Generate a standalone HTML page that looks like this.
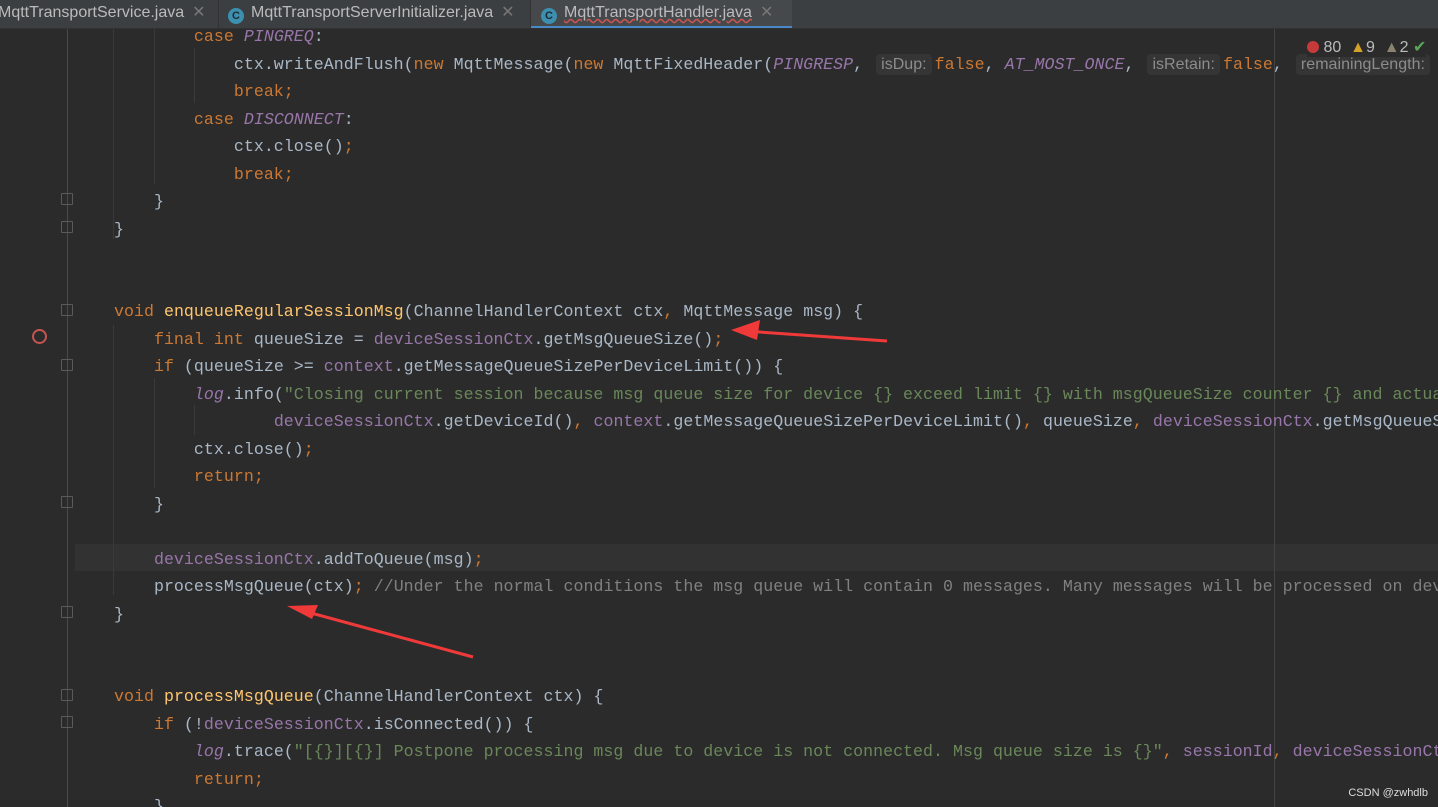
<!DOCTYPE html>
<html><head><meta charset="utf-8"><style>
*{margin:0;padding:0;box-sizing:border-box}
body{width:1438px;height:807px;overflow:hidden;background:#2b2b2b;position:relative;font-family:"Liberation Mono",monospace}
.tabs{position:absolute;left:0;top:0;width:1438px;height:29px;background:#3c3f41;border-bottom:1px solid #323232;font-family:"Liberation Sans",sans-serif;font-size:16px;color:#bbbbbb;overflow:hidden}
.tab{position:absolute;top:0;height:29px;line-height:26px;white-space:nowrap}
.ci{display:inline-block;width:16px;height:16px;border-radius:50%;background:#3d8fb0;color:#1e2a30;font-size:11px;line-height:16px;text-align:center;font-weight:bold;vertical-align:-2px;margin-right:7px}
.x{color:#777;margin-left:8px}
#wrap{position:absolute;left:0;top:29px;width:1438px;height:778px;overflow:hidden}
#code{position:absolute;left:114px;top:-6px;font-size:16.6px;line-height:27.5px;color:#a9b7c6;white-space:pre;letter-spacing:0.03px}
.k{color:#cc7832}.p{color:#9876aa}.pi{color:#9876aa;font-style:italic}.s{color:#6a8759}.c{color:#808080}.m{color:#ffc66d}
.h{font-family:"Liberation Sans",sans-serif;font-size:16px;color:#8c8c8c;background:#353535;border-radius:4px;padding:2px 5px;margin:0 3px}
.g{position:absolute;width:1px;background:#3a3a3a}
.f{position:absolute;left:61px;width:12px;height:12px;border:1.5px solid #5a5a5a;border-radius:1px}
</style></head><body>
<div style="position:absolute;left:75px;top:544px;width:1363px;height:27px;background:#323232"></div>
<div style="position:absolute;left:67px;top:29px;width:1px;height:778px;background:#4a4a4a"></div>
<div style="position:absolute;left:1274px;top:29px;width:1px;height:778px;background:#444"></div>
<div class="g" style="left:113px;top:29px;height:210px"></div>
<div class="g" style="left:154px;top:29px;height:155px"></div>
<div class="g" style="left:194px;top:48px;height:55px"></div>
<div class="g" style="left:113px;top:325px;height:270px"></div>
<div class="g" style="left:154px;top:378px;height:110px"></div>
<div class="g" style="left:194px;top:405px;height:30px"></div>
<div class="f" style="top:193px"></div><div class="f" style="top:221px"></div>
<div class="f" style="top:304px"></div><div class="f" style="top:359px"></div>
<div class="f" style="top:496px"></div><div class="f" style="top:606px"></div>
<div class="f" style="top:689px"></div><div class="f" style="top:716px"></div>
<div style="position:absolute;left:32px;top:329px;width:15px;height:15px;border:2px solid #c75450;border-radius:50%"></div>
<div id="wrap"><div id="code">        <span class="k">case</span> <span class="pi">PINGREQ</span>:
            ctx.writeAndFlush(<span class="k">new</span> MqttMessage(<span class="k">new</span> MqttFixedHeader(<span class="pi">PINGRESP</span>, <span class="h">isDup:</span><span class="k">false</span>, <span class="pi">AT_MOST_ONCE</span>, <span class="h">isRetain:</span><span class="k">false</span>, <span class="h">remainingLength:</span>
            <span class="k">break;</span>
        <span class="k">case</span> <span class="pi">DISCONNECT</span>:
            ctx.close()<span class="k">;</span>
            <span class="k">break;</span>
    }
}


<span class="k">void</span> <span class="m">enqueueRegularSessionMsg</span>(ChannelHandlerContext ctx<span class="k">,</span> MqttMessage msg) {
    <span class="k">final int</span> queueSize = <span class="p">deviceSessionCtx</span>.getMsgQueueSize()<span class="k">;</span>
    <span class="k">if</span> (queueSize >= <span class="p">context</span>.getMessageQueueSizePerDeviceLimit()) {
        <span class="pi">log</span>.info(<span class="s">"Closing current session because msg queue size for device {} exceed limit {} with msgQueueSize counter {} and actual</span>
                <span class="p">deviceSessionCtx</span>.getDeviceId()<span class="k">,</span> <span class="p">context</span>.getMessageQueueSizePerDeviceLimit()<span class="k">,</span> queueSize<span class="k">,</span> <span class="p">deviceSessionCtx</span>.getMsgQueueSize
        ctx.close()<span class="k">;</span>
        <span class="k">return;</span>
    }

    <span class="p">deviceSessionCtx</span>.addToQueue(msg)<span class="k">;</span>
    processMsgQueue(ctx)<span class="k">;</span> <span class="c">//Under the normal conditions the msg queue will contain 0 messages. Many messages will be processed on dev</span>
}


<span class="k">void</span> <span class="m">processMsgQueue</span>(ChannelHandlerContext ctx) {
    <span class="k">if</span> (!<span class="p">deviceSessionCtx</span>.isConnected()) {
        <span class="pi">log</span>.trace(<span class="s">"[{}][{}] Postpone processing msg due to device is not connected. Msg queue size is {}"</span><span class="k">,</span> <span class="p">sessionId</span><span class="k">,</span> <span class="p">deviceSessionCtx</span>.getMsg
        <span class="k">return;</span>
    }</div></div>
<div class="tabs">
<div class="tab" style="left:-2px">MqttTransportService.java<span class="x">✕</span></div>
<div style="position:absolute;left:218px;top:0;width:1px;height:29px;background:#323232"></div>
<div class="tab" style="left:228px"><span class="ci">C</span>MqttTransportServerInitializer.java<span class="x">✕</span></div>
<div style="position:absolute;left:530px;top:0;width:1px;height:29px;background:#323232"></div>
<div class="tab" style="left:531px;width:261px;background:#45494b;padding-left:10px;border-bottom:3px solid #4a88c7"><span class="ci">C</span><span style="text-decoration:underline wavy #c75450">MqttTransportHandler.java</span><span class="x">✕</span></div>
</div>
<div style="position:absolute;left:1307px;top:37px;font-family:'Liberation Sans',sans-serif;font-size:16px;color:#bbb;white-space:nowrap;background:#2b2b2b">
<span style="display:inline-block;width:12px;height:12px;border-radius:50%;background:#c73a3a;vertical-align:-1px"></span> 80 &nbsp;<span style="color:#d4a228">▲</span>9 &nbsp;<span style="color:#8a8370">▲</span>2 <span style="color:#5aa55a">✔</span></div>
<svg style="position:absolute;left:0;top:0" width="1438" height="807">
<line x1="887" y1="341" x2="745" y2="331" stroke="#f03a3a" stroke-width="3"/>
<polygon points="731,330 760,320 757,340" fill="#f03a3a"/>
<line x1="473" y1="657" x2="300" y2="610" stroke="#f03a3a" stroke-width="3"/>
<polygon points="287,606 318,605 312,619" fill="#f03a3a"/>
</svg>
<div style="position:absolute;right:10px;bottom:8px;font-family:'Liberation Sans',sans-serif;font-size:11px;color:#ddd">CSDN @zwhdlb</div>
</body></html>
